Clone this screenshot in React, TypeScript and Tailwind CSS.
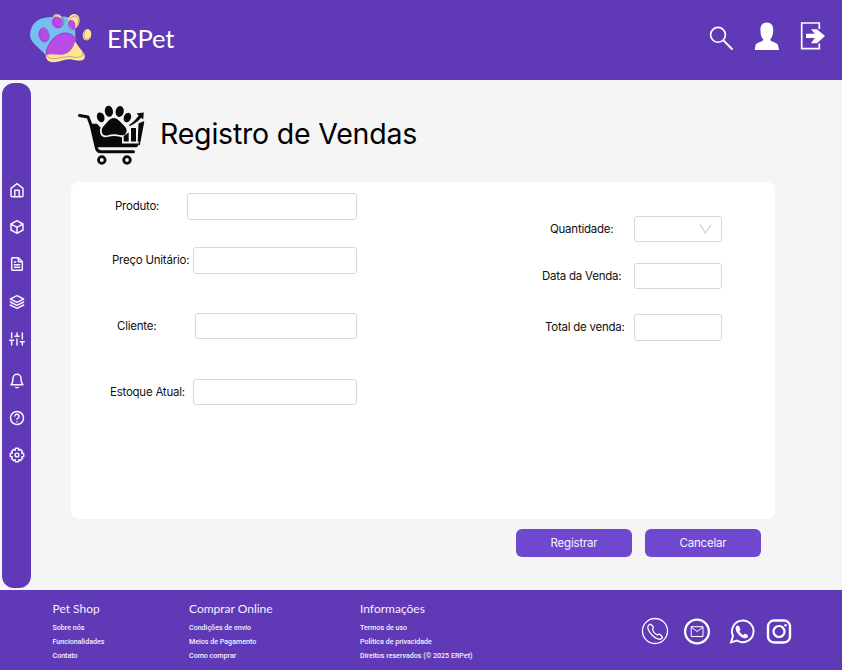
import type { ReactNode } from "react";

function PetLogo() {
  return (
    <svg className="h-[60px] w-[70px] shrink-0" viewBox="25 5 70 60" fill="none">
      <path d="M30 35C30 26 36 18 48 17.200C58 16 68 16 72 18.500C76 22 75 30 75.500 40L60 54L46 55.500C41 49 30 43 30 35Z" fill="#76bff0" />
      <path d="M53 18C53 14.500 56 13.800 58.500 14.200C61 14.500 61.500 17 61 19ZM68 21C69 13 76 12 79 17C81 22 78 28 74 29.500C70 29 68 26 68 21Z" fill="#ffe78d" />
      <ellipse cx="87" cy="34.700" rx="4.300" ry="5.700" fill="#ffe78d" transform="rotate(10 87 34.700)" />
      <path d="M46 54C47 46 60 42 75 40.500C77 46 84 51 84.800 56C85 62 78 61 72 59.500C64 58 60 63 51 62C46.500 61 45.500 57 46 54Z" fill="#ffe78d" />
      <path d="M46 55C45 46 54 34 64 32.600C71 32 76 36 75.300 41C74 46 71 53 63 54.500C57 55.500 51 53 46 55Z" fill="#b94ce7" />
      <ellipse cx="43.700" cy="35.200" rx="5.200" ry="7.200" fill="#b94ce7" transform="rotate(-14 43.700 35.200)" />
      <ellipse cx="57.300" cy="22.500" rx="5.600" ry="6" fill="#b94ce7" transform="rotate(-18 57.300 22.500)" />
      <path d="M68.500 21C71 19 74 20 75 23C76 26 75.500 29 74 29.500C70 29 67.500 25 68.500 21Z" fill="#b94ce7" />
      <g stroke="#5a2fa0" strokeOpacity=".75" strokeWidth=".5">
        <ellipse cx="44.500" cy="34.500" rx="4.600" ry="7" transform="rotate(-14 44.500 34.500)" />
        <ellipse cx="58.800" cy="21" rx="5" ry="6.500" transform="rotate(-18 58.800 21)" />
        <ellipse cx="73.500" cy="23" rx="4.800" ry="7.200" transform="rotate(18 73.500 23)" />
        <ellipse cx="88" cy="34" rx="4" ry="5.500" transform="rotate(12 88 34)" />
        <path d="M46.500 52C48 42 58 32 67 33C77 35 75 42 80 48C87 56 80 59 71 56.500C62 56 46 64 46.500 52Z" />
      </g>
    </svg>
  );
}

function CartLogo() {
  return (
    <svg className="h-[64px] w-[70px] shrink-0" viewBox="76 103 70 64" fill="none">
      <path d="M79.500 115.500L88 117L91 125L96.500 148.500Q97.500 151.700 101 151.700H133.500" stroke="#090909" strokeWidth="3" strokeLinecap="round" strokeLinejoin="round" />
      <path d="M90 123.800H97L103 130H122V143.500H138.700Q138.300 147.200 136 147.200H96Z" fill="#090909" />
      <path d="M113.800 117C119 117 120 121 124.500 124.800C130 130 127.500 137.500 120.500 136C116 134.800 112 134.800 108 136C100.500 138 99 130 103 125.500C107.500 121.500 108.500 117 113.800 117Z" fill="#090909" stroke="#f5f5f5" strokeWidth="1.800" />
      <g fill="#090909">
        <ellipse cx="100.700" cy="117.300" rx="3.700" ry="5" transform="rotate(-20 100.700 117.300)" />
        <ellipse cx="108.900" cy="111.300" rx="4.100" ry="5.500" transform="rotate(-8 108.900 111.300)" />
        <ellipse cx="119.700" cy="111.500" rx="4.100" ry="5.500" transform="rotate(10 119.700 111.500)" />
        <ellipse cx="127.400" cy="117.500" rx="3.600" ry="4.900" transform="rotate(22 127.400 117.500)" />
      </g>
      <path d="M123.700 136L128.700 132.500V141.500H123.700ZM131 128H136V141.500H131ZM138.500 123.500L143 121.500L140 141.500H137.700ZM136.500 113.500L143.800 112.500L143.200 119.500L141.300 117.800C138 121.500 133 125 129.500 126L129 125C133 122.500 136 119.500 138.700 115.500Z" fill="#090909" />
      <path d="M143.500 121.500L139 145" stroke="#090909" strokeWidth="1.600" />
      <g stroke="#090909" strokeWidth="2.800"><circle cx="101.800" cy="160" r="3.300" /><circle cx="127" cy="160" r="3.300" /></g>
    </svg>
  );
}

function SideIcon({ children, gap = "mt-[21.2px]" }: { children: ReactNode; gap?: string }) {
  return <svg className={`size-4 shrink-0 ${gap}`} viewBox="0 0 24 24" fill="none" stroke="#f8f4ff" strokeWidth="2.200" strokeLinecap="round" strokeLinejoin="round">{children}</svg>;
}

function Sidebar() {
  return (
    <nav className="ml-[2px] mt-[3px] flex h-[504.500px] w-[29px] shrink-0 flex-col items-center rounded-[12px] bg-[#6039b7] pt-[99px]">
      <SideIcon gap="mt-0"><path d="M3 9.500L12 2.500L21 9.500V20.500Q21 22 19.500 22H4.500Q3 22 3 20.500ZM8.700 22V12.500H15.300V22" /></SideIcon>
      <SideIcon><path d="M21 16.500V7.500L12 2.500L3 7.500V16.500L12 21.500ZM3.500 7.800L12 12.500L20.500 7.800M12 12.500V21.500" /></SideIcon>
      <SideIcon><path d="M14 2.500H5Q4 2.500 4 4V20Q4 21.500 5 21.500H19Q20 21.500 20 20V8.500ZM14 2.500V8.500H20M8 9H10M8 13H16M8 17H16" /></SideIcon>
      <SideIcon><path d="M12 2.500L2 7.500L12 12.500L22 7.500ZM2 12L12 17L22 12M2 16.500L12 21.500L22 16.500" /></SideIcon>
      <SideIcon><path d="M4 21V14M4 10V3M12 21V12M12 8V3M20 21V16M20 12V3M1 14H7M9 8H15M17 16H23" /></SideIcon>
      <SideIcon gap="mt-[26px]"><path d="M18 8A6 6 0 0 0 6 8C6 15 3 17.500 3 17.500H21C21 17.500 18 15 18 8M10.300 21.500Q12 22.500 13.700 21.500" /></SideIcon>
      <SideIcon><circle cx="12" cy="12" r="9.800" /><path d="M9 9A3 3 0 0 1 15 10C15 12 12 12 12 14M12 17.500H12.010" /></SideIcon>
      <SideIcon><circle cx="12" cy="12" r="2.800" /><path d="M9.700 2H14.300L14.800 5L17.300 3.800L20.200 6.700L19 9.200L22 9.700V14.300L19 14.800L20.200 17.300L17.300 20.200L14.800 19L14.300 22H9.700L9.200 19L6.700 20.200L3.800 17.300L5 14.800L2 14.300V9.700L5 9.200L3.800 6.700L6.700 3.800L9.200 5Z" /></SideIcon>
    </nav>
  );
}

function Field({ label, before, labelWidth, inputWidth, top, select = false }: { label: string; before: string; labelWidth: string; inputWidth: string; top: string; select?: boolean }) {
  return (
    <div className={`flex h-[26.500px] items-center ${before} ${top}`}>
      <label className={`shrink-0 whitespace-nowrap text-[11.500px] leading-4 tracking-[-0.240px] text-[#111] ${labelWidth}`}>{label}</label>
      <div className={`flex h-full shrink-0 items-center justify-end rounded-[3px] border border-[#d9d9d9] bg-white ${inputWidth}`}>
        {select && <svg className="mr-[9px] h-[11px] w-[13px]" viewBox="0 0 13 11" fill="none"><path d="M1 1.500L6.500 10L12 1.500" stroke="#cfcfcf" strokeWidth="1.200" /></svg>}
      </div>
    </div>
  );
}

function FooterColumn({ title, items, width }: { title: string; items: string[]; width: string }) {
  return (
    <div className={`shrink-0 whitespace-nowrap text-[#f5f0ff] ${width}`}>
      <h2 className="font-[Lato,sans-serif] text-[12px] leading-[16px]">{title}</h2>
      <ul className="mt-[4px] font-[Roboto,sans-serif] text-[7.100px] font-medium leading-[14.200px]">{items.map(i => <li key={i}>{i}</li>)}</ul>
    </div>
  );
}

export default function App() {
  return (
    <div className="flex h-[670px] w-[842px] flex-col overflow-hidden bg-[#f5f5f5] font-[Inter,sans-serif] text-black">
      <header className="flex h-20 shrink-0 bg-[#6039b7] text-white">
        <div className="flex w-[700px] shrink-0 pl-[25px] pt-[5px]">
          <PetLogo />
          <span className="ml-[12px] mt-[13px] font-[Lato,sans-serif] text-[25.500px] leading-[40px] tracking-[-0.100px]">ERPet</span>
        </div>
        <svg className="mt-[10px] h-[60px] w-[142px] shrink-0" viewBox="700 10 142 60" fill="none">
          <circle cx="718" cy="34.800" r="7.400" stroke="white" strokeWidth="1.600" />
          <path d="M723.500 40.500L732.500 49.500" stroke="white" strokeWidth="2" />
          <path d="M766.800 22.500C762 22.500 760 26 760.500 31C760.500 35 761.500 37.500 763.300 39.500C763.500 42 757 42 755.500 45L754.800 50H779L778 45C776.500 42 770 42 770.200 39.500C772.500 37 773 34 773.200 31C773.600 26 771.500 22.500 766.800 22.500Z" fill="white" />
          <path d="M819.300 29V23H801.700V48.700H819.300V43.500" stroke="white" strokeWidth="1.700" />
          <path d="M806 33.800H814.800L811 29.200H817L825 36L817 43.200H811L814.800 38H806Z" fill="white" />
        </svg>
      </header>

      <div className="flex h-[510px] shrink-0">
        <Sidebar />
        <main className="ml-[40px] w-[704px]">
          <div className="flex h-[102px] pl-[5px] pt-[23px]">
            <CartLogo />
            <h1 className="ml-[14px] mt-[11px] whitespace-nowrap text-[28.500px] leading-10 tracking-[-0.210px]">Registro de Vendas</h1>
          </div>
          <section className="flex h-[337px] rounded-lg bg-white">
            <div className="w-[471px] pt-[11px]">
              <Field label="Produto:" before="pl-[44px]" labelWidth="w-[72px]" inputWidth="w-[169.500px]" top="" />
              <Field label="Preço Unitário:" before="pl-[41px]" labelWidth="w-[81px]" inputWidth="w-[163.500px]" top="mt-[27.500px]" />
              <Field label="Cliente:" before="pl-[46px]" labelWidth="w-[78px]" inputWidth="w-[161.500px]" top="mt-[39px]" />
              <Field label="Estoque Atual:" before="pl-[39px]" labelWidth="w-[83px]" inputWidth="w-[163.500px]" top="mt-[39.500px]" />
            </div>
            <div className="pt-[33.500px]">
              <Field label="Quantidade:" before="pl-[8px]" labelWidth="w-[84px]" inputWidth="w-[88px]" top="" select />
              <Field label="Data da Venda:" before="pl-[0px]" labelWidth="w-[92px]" inputWidth="w-[88px]" top="mt-[20.500px]" />
              <Field label="Total de venda:" before="pl-[3px]" labelWidth="w-[89px]" inputWidth="w-[88px]" top="mt-[25px]" />
            </div>
          </section>
          <div className="mt-[9.500px] flex justify-end gap-[13px] pr-[14px] text-[11.500px] tracking-[-0.200px] text-[#f6f1ff]">
            <button className="h-[28.500px] w-[116px] rounded-[6px] bg-[#7047cf] pt-[1px]">Registrar</button>
            <button className="h-[28.500px] w-[116px] rounded-[6px] bg-[#7047cf] pt-[1px]">Cancelar</button>
          </div>
        </main>
      </div>

      <footer className="flex h-20 shrink-0 bg-[#6039b7] pl-[52.500px] pt-[11px]">
        <FooterColumn title="Pet Shop" width="w-[136.500px]" items={["Sobre nós", "Funcionalidades", "Contato"]} />
        <FooterColumn title="Comprar Online" width="w-[171px]" items={["Condições de envio", "Meios de Pagamento", "Como comprar"]} />
        <FooterColumn title="Informações" width="w-[270px]" items={["Termos de uso", "Política de privacidade", "Direitos reservados (© 2025 ERPet)"]} />
        <svg className="mt-[4px] h-[55px] w-[180px] shrink-0" viewBox="630 605 180 55" fill="none" stroke="#fff">
          <circle cx="655" cy="631" r="12.500" strokeWidth="1.300" />
          <path d="M651 624.500L653 626.500Q654 627.500 652.500 629C653 632 655.500 634 657.500 635Q659 633.500 660 634.500L662 636.500Q663 637.500 661.500 638.500C659.500 640.500 655 638 652 635C648.500 631 647 627 648.500 625.500Q650 623.500 651 624.500Z" strokeWidth="1.300" />
          <circle cx="697" cy="631.500" r="11.900" strokeWidth="2.300" />
          <path d="M691.200 626.700H703V636.500H691.200ZM691.200 627L697.100 631.500L703 627" strokeWidth="1" />
          <path d="M731 642.300L733 636A10.800 10.800 0 1 1 737 640.500Z" strokeWidth="1.900" />
          <path d="M737.300 625.500L739 626L740.500 629.500L739.300 631Q741 634.500 743.500 635L745 633.500L748 635.200Q748 638 745.300 638.200C741 638.500 735.300 632 735.600 628Q735.800 626 737.300 625.500Z" fill="white" stroke="none" />
          <rect x="768" y="620.500" width="22" height="22" rx="6" strokeWidth="2.400" />
          <circle cx="779" cy="631.500" r="5.500" strokeWidth="2.200" />
          <circle cx="785.500" cy="625.200" r="1.200" fill="white" stroke="none" />
        </svg>
      </footer>
    </div>
  );
}
